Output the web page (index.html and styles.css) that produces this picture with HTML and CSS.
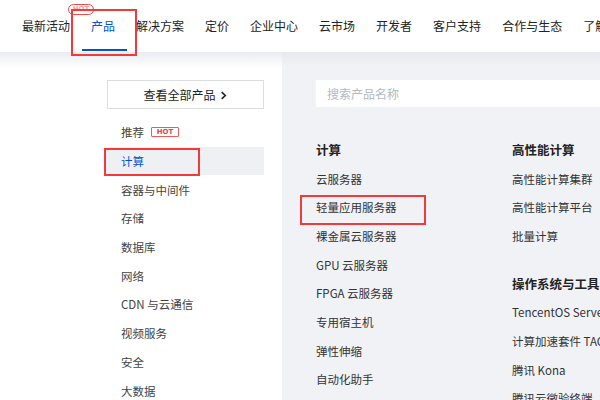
FILE: index.html
```html
<!DOCTYPE html>
<html lang="zh-CN">
<head>
<meta charset="utf-8">
<title>产品</title>
<link rel="stylesheet" href="styles.css">
</head>
<body>
<div class="page">
  <header class="nav">
    <a class="nav-item">最新活动</a>
    <a class="nav-item active">产品<span class="nav-hot">HOT</span></a>
    <a class="nav-item">解决方案</a>
    <a class="nav-item">定价</a>
    <a class="nav-item">企业中心</a>
    <a class="nav-item">云市场</a>
    <a class="nav-item">开发者</a>
    <a class="nav-item">客户支持</a>
    <a class="nav-item">合作与生态</a>
    <a class="nav-item">了解腾讯云</a>
  </header>

  <main class="menu">
    <aside class="side">
      <button class="all-btn">查看全部产品<svg class="chev" viewBox="0 0 10 10" width="9" height="9"><path d="M3 1.2 L7 5 L3 8.8" fill="none" stroke="#222" stroke-width="1.8"/></svg></button>
      <ul class="cats">
        <li class="cat">推荐<span class="hot">HOT</span></li>
        <li class="cat selected">计算</li>
        <li class="cat">容器与中间件</li>
        <li class="cat">存储</li>
        <li class="cat">数据库</li>
        <li class="cat">网络</li>
        <li class="cat">CDN 与云通信</li>
        <li class="cat">视频服务</li>
        <li class="cat">安全</li>
        <li class="cat">大数据</li>
      </ul>
    </aside>

    <section class="content">
      <div class="search">搜索产品名称</div>
      <div class="cols">
        <div class="col">
          <h3 class="group">计算</h3>
          <a class="prod">云服务器</a>
          <a class="prod">轻量应用服务器</a>
          <a class="prod">裸金属云服务器</a>
          <a class="prod">GPU 云服务器</a>
          <a class="prod">FPGA 云服务器</a>
          <a class="prod">专用宿主机</a>
          <a class="prod">弹性伸缩</a>
          <a class="prod">自动化助手</a>
        </div>
        <div class="col">
          <h3 class="group">高性能计算</h3>
          <a class="prod">高性能计算集群</a>
          <a class="prod">高性能计算平台</a>
          <a class="prod">批量计算</a>
          <h3 class="group spaced">操作系统与工具</h3>
          <a class="prod">TencentOS Server</a>
          <a class="prod">计算加速套件 TACO Kit</a>
          <a class="prod">腾讯 Kona</a>
          <a class="prod">腾讯云微验终端<span class="hot">NEW</span></a>
        </div>
      </div>
    </section>
  </main>

  <div class="mark mark-nav"></div>
  <div class="mark mark-cat"></div>
  <div class="mark mark-prod"></div>
</div>
</body>
</html>
```

FILE: styles.css
```css
* { box-sizing: border-box; margin: 0; padding: 0; }
html, body { width: 600px; height: 400px; overflow: hidden; background: #fff; }
body {
  font-family: "Noto Sans CJK SC", "Noto Sans", sans-serif;
  color: #333;
}
.page { position: relative; width: 600px; height: 400px; overflow: hidden; }
a { text-decoration: none; color: inherit; }
ul { list-style: none; }

/* top nav */
.nav {
  height: 52px;
  display: flex;
  align-items: center;
  gap: 21px;
  padding-left: 22px;
  white-space: nowrap;
  background: #fff;
}
.nav-item {
  position: relative;
  font-size: 12px;
  color: #222;
  line-height: 52px;
  flex-shrink: 0;
}
.nav-item.active { color: #0052d9; }
.nav-item.active::after {
  content: "";
  position: absolute;
  left: -9px;
  right: -12px;
  bottom: 1px;
  height: 2px;
  background: #0052d9;
}
.nav-hot {
  position: absolute;
  left: -23px;
  top: 4px;
  width: 26px;
  height: 11px;
  border: 1px solid #f04848;
  border-radius: 6px;
  background: #fff;
  color: #f7a3a3;
  font-family: "DejaVu Sans", sans-serif;
  font-size: 7px;
  font-weight: bold;
  line-height: 9px;
  text-align: center;
}

/* body */
.menu {
  display: flex;
  height: 348px;
}
.side {
  width: 282px;
  flex-shrink: 0;
  padding: 28px 0 0 105px;
  background: linear-gradient(to bottom, #eaecf1 0, #fff 16px);
}
.all-btn {
  display: flex;
  align-items: center;
  justify-content: center;
  gap: 3px;
  margin-left: 2px;
  width: 157px;
  height: 29px;
  border: 1px solid #dcdde1;
  background: #fff;
  font-family: inherit;
  font-size: 12px;
  color: #222;
}
.chev { margin-top: 1px; }
.cats { margin-top: 9px; width: 159px; }
.cat {
  display: flex;
  align-items: center;
  height: 28.7px;
  padding-left: 16px;
  font-size: 11.5px;
  color: #444;
}
.cat.selected { background: #eff0f4; color: #0052d9; }
.hot {
  display: inline-block;
  margin-left: 7px;
  width: 28px;
  height: 10px;
  border: 1px solid #ef5b5b;
  border-radius: 1px;
  background: #fff;
  color: #e54545;
  font-family: "DejaVu Sans", sans-serif;
  font-size: 7px;
  font-weight: bold;
  line-height: 8px;
  text-align: center;
}

.content {
  flex: 1;
  padding: 28px 0 0 34px;
  background: linear-gradient(to bottom, #e7e9ee 0, #f1f2f6 14px);
  overflow: hidden;
}
.search {
  height: 27px;
  width: 300px;
  background: #fff;
  padding-left: 11px;
  font-size: 12px;
  line-height: 27px;
  color: #b3b8c3;
}
.cols {
  display: grid;
  grid-template-columns: 196px 200px;
  margin-top: 28px;
}
.col { display: flex; flex-direction: column; white-space: nowrap; }
.group {
  height: 29.6px;
  line-height: 29.6px;
  font-size: 12.5px;
  font-weight: bold;
  color: #222;
}
.group.spaced { margin-top: 18px; }
.prod {
  height: 28.7px;
  line-height: 28.7px;
  font-size: 11.5px;
  color: #333;
}

/* annotation rectangles */
.mark {
  position: absolute;
  border: 2px solid #f23a3c;
}
.mark-nav { left: 71px; top: 9px; width: 66px; height: 47px; }
.mark-cat { left: 104px; top: 148px; width: 96px; height: 28px; }
.mark-prod { left: 300px; top: 195px; width: 126px; height: 30px; }
```
